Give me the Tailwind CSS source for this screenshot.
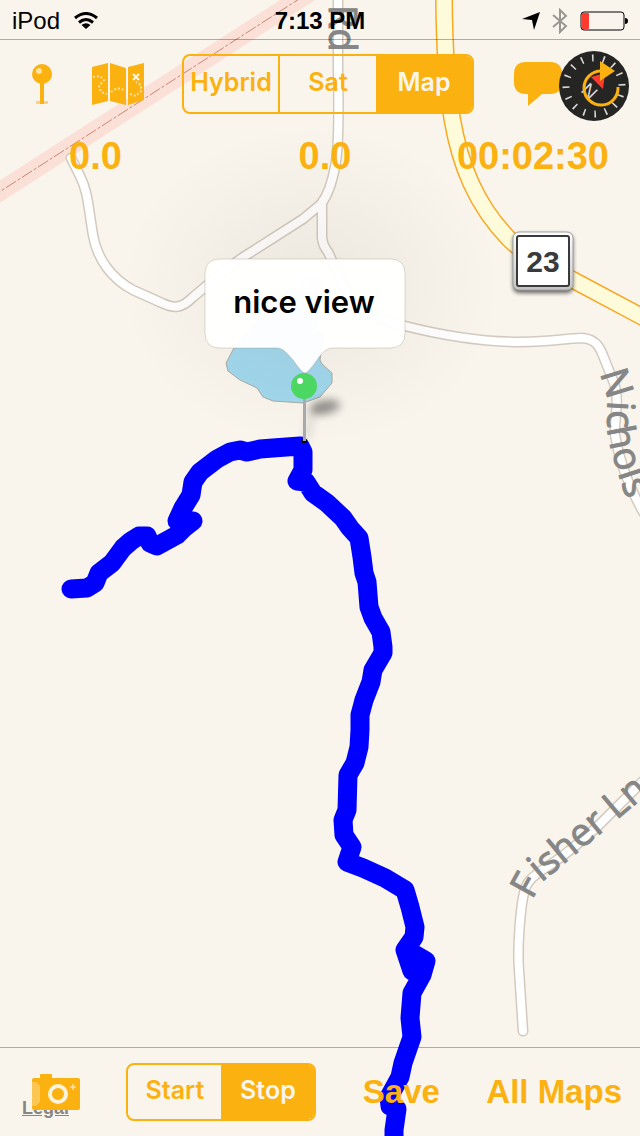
<!DOCTYPE html>
<html lang="en">
    <head>
        <meta charset="UTF-8">
        <meta name="viewport" content="width=device-width, initial-scale=1.0">
        <title>Trail Map</title>
        <script src="https://cdn.jsdelivr.net/npm/@tailwindcss/browser@4"></script>
    </head>
    <body class="bg-[#f9f5ed] font-['Liberation_Sans',Arial,sans-serif] text-[#fbb110]">
        <div class="relative isolate flex min-h-screen flex-col overflow-hidden">

            <!-- Map -->
            <svg class="absolute inset-0 -z-10 h-full w-full" viewBox="0 0 640 1136" preserveAspectRatio="xMidYMid slice" role="img" aria-label="Map with recorded route">
                <defs>
                    <radialGradient id="glow">
                        <stop offset="0" stop-color="#786450" stop-opacity=".09" />
                        <stop offset=".5" stop-color="#786450" stop-opacity=".05" />
                        <stop offset="1" stop-color="#786450" stop-opacity="0" />
                    </radialGradient>
                    <linearGradient id="shieldEdge" x1="0" y1="0" x2="0" y2="1">
                        <stop offset="0" stop-color="#fff" />
                        <stop offset="1" stop-color="#c4c4c4" />
                    </linearGradient>
                    <filter id="soft" x="-50%" y="-100%" width="200%" height="300%"><feGaussianBlur stdDeviation="4" /></filter>
                    <filter id="drop" x="-20%" y="-20%" width="140%" height="150%"><feGaussianBlur stdDeviation="2" /></filter>
                    <path id="northRoad" d="M338 -10V70C339 115 339 150 335 167C332 183 328 195 321 204L303 219L245 256C225 269 210 283 192 298C182 308 174 309 162 303L133 290C112 279 97 259 93 235C88 205 88 192 80 176L71 158" />
                    <path id="eastRoad" d="M322 204V238Q323 246 328 252L350 300Q360 314 405 326C445 336 480 342 520 342C545 342 565 339 580 338C592 338 598 343 602 353L614 383C620 400 614 420 615 435C620 465 630 490 645 515" />
                    <path id="fisherRoad" d="M523 1031L519 970C517 945 521 905 524 893C526 881 534 876 545 868C565 856 580 842 597 827L650 774" />
                    <path id="countyRoad" d="M444 -10C444 40 446 80 452 118C460 165 476 205 509 239C528 257 545 266 573 280L650 321" />
                    <path id="rdLabel" d="M329 5V80" />
                    <path id="nicholsLabel" d="M600 373L608 399Q606 425 609 440T621 482L637 530" />
                    <path id="fisherLabel" d="M532 900L542 882L618 819L670 775" />
                </defs>

                <!-- Boundary -->
                <path d="M-10 198L310 -8" stroke="#fbe0d8" stroke-width="19" />
                <path d="M-10 198L310 -8" stroke="#cd8477" stroke-width="1" stroke-dasharray="12 2 3 2" />

                <!-- Roads -->
                <g fill="none" stroke-linecap="round" stroke-linejoin="round">
                    <g stroke="#d3cabf" stroke-width="11">
                        <use href="#northRoad" /><use href="#eastRoad" /><use href="#fisherRoad" />
                    </g>
                    <g stroke="#fff" stroke-width="8">
                        <use href="#northRoad" /><use href="#eastRoad" /><use href="#fisherRoad" />
                    </g>
                    <use href="#countyRoad" stroke="#f8a823" stroke-width="18" />
                    <use href="#countyRoad" stroke="#fdfbda" stroke-width="15" />
                </g>

                <!-- Pond -->
                <path d="M226 363L235 346L285 292L318 292V320L314 330L323 333L320 360L322 364L332 373V383L320 397L303 403L273 401L263 397L257 388L240 380L228 371Z" fill="#a0d7ed" stroke="#a8aaa5" />
                <ellipse cx="312" cy="285" rx="190" ry="160" fill="url(#glow)" />

                <!-- Road names -->
                <g class="font-['Open_Sans','Noto_Sans',sans-serif]" font-size="38" fill="#868686" stroke="#868686" stroke-width="1">
                    <text><textPath href="#rdLabel">Rd</textPath></text>
                    <text><textPath href="#nicholsLabel">Nichols</textPath></text>
                    <text><textPath href="#fisherLabel">Fisher Ln</textPath></text>
                </g>

                <!-- Route shield -->
                <rect x="513" y="234" width="60" height="59" rx="6" fill="#000" opacity=".6" filter="url(#drop)" />
                <rect x="513" y="232" width="60" height="58" rx="6" fill="url(#shieldEdge)" stroke="#a0a0a0" />
                <rect x="517" y="236" width="52" height="50" rx="2" fill="#fff" stroke="#3a3a3a" stroke-width="2" />
                <text x="543" y="272" text-anchor="middle" font-size="30" font-weight="700" fill="#3a3a3a">23</text>

                <!-- Recorded route -->
                <path fill="none" stroke="#0000fe" stroke-width="19" stroke-linecap="round" stroke-linejoin="round" d="M71 589L87 588L95 583L99 573L112 563L123 548L131 541L139 536H147L150 543L157 546L177 535L184 528L193 521H177L183 508L191 495L193 482L200 472L217 459L230 452L240 450L247 452L260 449L273 448L300 446L303 452V470L297 481L306 482L313 493L327 503L343 518L350 528L359 538L362 557L364 573L367 582L369 607L373 618L381 632L383 647V653L373 670L371 682L364 700L360 715V730L359 747L355 763L348 775L347 810L343 820L344 835L352 847L347 862L363 868L385 878L405 890L410 907L415 927L414 937L405 950L412 971L414 954L426 961L422 975L412 993L410 1018L412 1037L403 1063L400 1077L389 1097L390 1106L397 1109L394 1130V1150" />

                <!-- Pin and callout -->
                <path d="M306 440L312 412L322 408" fill="none" stroke="#000" stroke-opacity=".12" stroke-width="6" filter="url(#soft)" />
                <ellipse cx="325" cy="407" rx="15" ry="7" fill="#000" opacity=".4" transform="rotate(-10 325 407)" filter="url(#soft)" />
                <ellipse cx="304" cy="441" rx="3" ry="2" fill="#000" />
                <path d="M304.500 396V441" stroke="#a9a9ad" stroke-width="3" />
                <path d="M220 259H390Q405 259 405 274V333Q405 348 390 348H333C326 348 322 353 317 360Q308 373 305 373Q302 373 293 360C287 353 283 348 277 348H220Q205 348 205 333V274Q205 259 220 259Z" fill="#fff" fill-opacity=".96" stroke="#786e5a" stroke-opacity=".25" />
                <text class="font-['Inter','Liberation_Sans',sans-serif]" x="304" y="313" text-anchor="middle" font-size="31" font-weight="600" fill="#000">nice view</text>
                <circle cx="304" cy="386" r="13" fill="#4cd763" />
                <circle cx="300" cy="381" r="3" fill="#fff" />
            </svg>

            <!-- Status bar -->
            <header class="grid h-10 grid-cols-[1fr_auto_1fr] items-center border-b border-black/30 px-3 pt-[2px] text-2xl leading-8 text-black">
                <div class="flex items-center gap-[14px]">
                    <span>iPod</span>
                    <svg class="h-[18px] w-6" viewBox="0 0 24 18" fill="none" stroke="#000" stroke-width="3" aria-label="Wi-Fi">
                        <path d="M1 6Q12 -3 23 6" />
                        <path d="M5 10.500Q12 4.500 19 10.500" />
                        <path d="M12 17L7.500 13Q12 9.500 16.500 13Z" fill="#000" stroke="none" />
                    </svg>
                </div>
                <span class="font-bold">7:13 PM</span>
                <div class="flex items-center justify-end gap-3">
                    <svg class="h-[18px] w-[18px]" viewBox="0 0 18 18" aria-label="Location"><path d="M0 7L18 0L12 18L10 8Z" fill="#000" /></svg>
                    <svg class="h-[26px] w-4" viewBox="0 0 16 26" fill="none" stroke="#9a9792" stroke-width="2" aria-label="Bluetooth"><path d="M1 7L14 18L8 24V2L14 8L1 19" /></svg>
                    <svg class="h-5 w-12" viewBox="0 0 48 20" aria-label="Battery low">
                        <rect x="1" y="1" width="43" height="18" rx="3" fill="none" stroke="#000" />
                        <rect x="2" y="2" width="7" height="16" rx="1" fill="#ff3b30" />
                        <path d="M45 7Q48 7 48 10T45 13Z" fill="#000" />
                    </svg>
                </div>
            </header>

            <!-- Top toolbar -->
            <nav class="flex items-center pt-[6px] pr-[10px] pl-8">
                <button type="button" aria-label="Drop pin">
                    <svg class="h-10 w-5" viewBox="0 0 20 40">
                        <path d="M4 37H16V40H4Z" fill="#fbb110" opacity=".5" />
                        <path d="M8 18H12V40H8Z" fill="#fbb110" />
                        <circle cx="10" cy="10" r="10" fill="#fbb110" />
                        <circle cx="7" cy="7" r="3" fill="#fde2a0" />
                    </svg>
                </button>
                <button type="button" class="ml-10" aria-label="Trail maps">
                    <svg class="h-[42px] w-[52px]" viewBox="0 0 52 42">
                        <path d="M0 4L16 0V38L0 42ZM18 0L34 5V42L18 38ZM36 4L52 0V37L36 42Z" fill="#fbb110" />
                        <path d="M1 14L8 13L12 17L7 23L9 29L15 31M19 29L25 25L32 27M38 31L44 33L49 28L49 22L44 19" fill="none" stroke="#fde2a0" stroke-width="2" stroke-dasharray="2 2" />
                        <path d="M41 11L47 17M47 11L41 17" stroke="#fff8e6" stroke-width="2" />
                    </svg>
                </button>
                <div class="mr-10 ml-[38px] grid h-[60px] flex-1 grid-cols-3 overflow-hidden rounded-lg border-2 border-[#fbb110] font-['Inter','Liberation_Sans',sans-serif] text-[25px] font-semibold" role="group" aria-label="Map type">
                    <button type="button" aria-pressed="false" class="border-r-2 border-[#fbb110] pb-[2px]">Hybrid</button>
                    <button type="button" aria-pressed="false" class="pb-[2px]">Sat</button>
                    <button type="button" aria-pressed="true" class="bg-[#fbb110] pb-[2px] text-[#f9f5ed]">Map</button>
                </div>
                <button type="button" aria-label="Add note">
                    <svg class="h-11 w-12" viewBox="0 0 48 44"><path d="M12 0H36Q48 0 48 12V20Q48 32 36 32H28L14 44V32H12Q0 32 0 20V12Q0 0 12 0Z" fill="#fbb110" /></svg>
                </button>
                <button type="button" class="mt-1 -ml-1" aria-label="Compass">
                    <svg class="h-[72px] w-[72px]" viewBox="0 0 72 72">
                        <circle cx="36" cy="36" r="35" fill="#252523" />
                        <circle cx="36" cy="36" r="28" fill="none" stroke="#d8d8d8" stroke-width="7" stroke-dasharray="1.600 9.400" pathLength="176" transform="rotate(-4 36 36)" />
                        <text transform="translate(22 41) rotate(45)" font-size="19" fill="#d8d8d8">N</text>
                        <path d="M33 27L47 23L45 39Z" fill="#ff3b30" />
                        <path d="M60 37A17 17 0 1 1 43 21" fill="none" stroke="#fbb110" stroke-width="3" />
                        <path d="M42 11V31L57 21Z" fill="#fbb110" />
                    </svg>
                </button>
            </nav>

            <!-- Trip stats -->
            <section class="grid grid-cols-[1fr_auto_1fr] pt-3 pr-[31px] pl-[41px] text-[38px] leading-[44px] font-bold" aria-label="Trip stats">
                <span class="pl-7">0.0</span>
                <span>0.0</span>
                <span class="text-right">00:02:30</span>
            </section>

            <!-- Bottom toolbar -->
            <footer class="relative mt-auto flex h-[89px] items-center justify-between border-t border-black/30 pr-[18px] pl-8">
                <a href="#legal" class="absolute bottom-[18px] left-[22px] text-lg leading-5 font-bold text-[#858585] underline">Legal</a>
                <button type="button" class="relative" aria-label="Take photo">
                    <svg class="h-9 w-12" viewBox="0 0 48 36">
                        <path d="M2 4H8V1Q8 0 9 0H19Q20 0 20 1V4H46Q48 4 48 6V34Q48 36 46 36H2Q0 36 0 34V6Q0 4 2 4Z" fill="#fbb110" />
                        <path d="M0 8H4L8 12V28L4 32H0Z" fill="#fcc652" />
                        <circle cx="26" cy="20" r="8" fill="#fbb110" stroke="#fdf3dc" stroke-width="4" />
                        <path d="M41 10V16M38 13H44" stroke="#fdf3dc" stroke-width="1" />
                    </svg>
                </button>
                <div class="grid h-[58px] w-[190px] grid-cols-2 overflow-hidden rounded-lg border-2 border-[#fbb110] font-['Inter','Liberation_Sans',sans-serif] text-[25px] font-semibold" role="group" aria-label="Recording">
                    <button type="button" aria-pressed="false" class="pb-[2px]">Start</button>
                    <button type="button" aria-pressed="true" class="bg-[#fbb110] pb-[2px] text-[#f9f5ed]">Stop</button>
                </div>
                <button type="button" class="text-[33px] leading-10 font-bold">Save</button>
                <button type="button" class="text-[33px] leading-10 font-bold">All Maps</button>
            </footer>
        </div>
    </body>
</html>
